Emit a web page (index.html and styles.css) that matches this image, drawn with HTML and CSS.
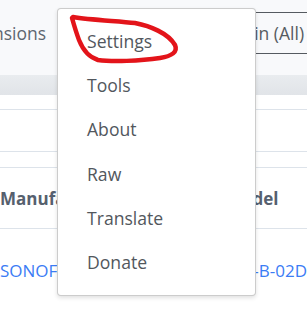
FILE: index.html
```html
<!DOCTYPE html>
<html>
<head>
<meta charset="utf-8">
<link rel="stylesheet" href="styles.css">
</head>
<body>
<div class="page">
  <div class="topbar">
    <div class="crumb"><span>Dimensions</span></div>
    <div class="select"><span>Domain (All)</span></div>
  </div>
  <div class="band"></div>
  <div class="gap"></div>
  <div class="row empty"></div>
  <div class="row thin"></div>
  <div class="row head">
    <div class="cell left"><span>Manufacturer</span></div>
    <div class="cell right">Model</div>
  </div>
  <div class="row data">
    <div class="cell left link"><span>SONOFF</span></div>
    <div class="cell right link">ZBMINI-B-02D</div>
  </div>

  <div class="menu">
    <div class="item">Settings</div>
    <div class="item">Tools</div>
    <div class="item">About</div>
    <div class="item">Raw</div>
    <div class="item">Translate</div>
    <div class="item">Donate</div>
  </div>

  <svg class="scribble" width="307" height="80" viewBox="0 0 307 80">
    <path d="M73 17 C 90 20, 118 21, 135 23 C 150 26, 168 33, 175 45 C 178 52, 172 56, 160 58 C 140 61, 112 62, 98 60 C 88 57, 83 50, 79 40 C 76 32, 74 25, 72 18" fill="none" stroke="#e3141a" stroke-width="4.5" stroke-linecap="round" stroke-linejoin="round"/>
  </svg>
</div>
</body>
</html>
```

FILE: styles.css
```css
* { box-sizing: border-box; }
html, body {
  margin: 0;
  padding: 0;
  width: 307px;
  height: 312px;
  overflow: hidden;
  background: #ffffff;
  font-family: "Open Sans", "Noto Sans", sans-serif;
}
.page {
  position: relative;
  width: 307px;
  height: 312px;
  overflow: hidden;
}
.topbar {
  height: 75px;
  background: #f8f9fb;
  display: flex;
  align-items: flex-start;
  justify-content: space-between;
  padding-top: 12px;
}
.crumb {
  width: 46px;
  height: 42px;
  display: flex;
  justify-content: flex-end;
  align-items: center;
  overflow: hidden;
  color: #5d6670;
  font-size: 17.5px;
  white-space: nowrap;
}
.select {
  width: 130px;
  margin-right: -20px;
  height: 42px;
  border-top: 1px solid #555a60;
  border-bottom: 1px solid #555a60;
  display: flex;
  align-items: center;
  padding-left: 8px;
  color: #555b61;
  font-size: 17.5px;
  white-space: nowrap;
}
.band {
  height: 20px;
  background: linear-gradient(#e9ecef, #e1e4e8);
}
.gap {
  height: 15px;
  border-bottom: 1px solid #dde3ea;
}
.row {
  display: flex;
  border-bottom: 1px solid #dde3ea;
}
.row.empty { height: 42px; }
.row.thin { height: 16px; }
.row.head {
  height: 61px;
  align-items: center;
  font-weight: 700;
  color: #56606e;
  font-size: 17px;
}
.row.data {
  height: 82px;
  align-items: center;
  font-size: 17px;
  border-bottom: none;
}
.cell { white-space: nowrap; }
.cell.left { width: 200px; }
.cell.right { margin-left: 24px; }
.row.head .cell.right { margin-left: 26px; }
.link { color: #3b7cf5; }
.menu {
  position: absolute;
  left: 57px;
  top: 8px;
  width: 199px;
  height: 288px;
  background: #fff;
  border: 1px solid rgba(0, 0, 0, 0.2);
  border-radius: 4px;
  box-shadow: 0 2px 4px rgba(0, 0, 0, 0.12);
  padding: 10px 0 12px;
}
.item {
  height: 44.2px;
  display: flex;
  align-items: center;
  padding-left: 29px;
  color: #52575d;
  font-size: 17.6px;
}
.scribble {
  position: absolute;
  left: 0;
  top: 0;
}
```
